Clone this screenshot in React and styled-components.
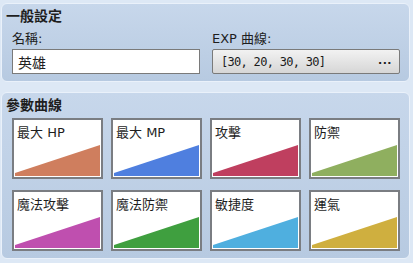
import React from 'react';
import styled, { createGlobalStyle } from 'styled-components';

const curves = [
  { label: '最大 HP', color: '#cf7e5e' },
  { label: '最大 MP', color: '#4f7fdf' },
  { label: '攻擊', color: '#bf3f5f' },
  { label: '防禦', color: '#8faf5f' },
  { label: '魔法攻擊', color: '#bf4faf' },
  { label: '魔法防禦', color: '#3f9f3f' },
  { label: '敏捷度', color: '#4fafdf' },
  { label: '運氣', color: '#cfaf3f' },
];

const GlobalStyle = createGlobalStyle`
  html, body {
    margin: 0;
    padding: 0;
    background: #dde8f5;
  }
  body {
    font-family: "DejaVu Sans", "Noto Sans CJK TC", sans-serif;
    color: #1e1e1e;
  }
`

class Curve extends React.Component {
  render() {
    const { label, color } = this.props;
    return (
      <Card>
        <CardLabel>{label}</CardLabel>
        <Graph viewBox="0 0 85 31" preserveAspectRatio="none">
          <polygon points="0,28 85,0 85,31 0,31" fill={color} />
        </Graph>
      </Card>
    )
  }
}

export default class App extends React.Component {
  render() {
    return (
      <Page>
        <GlobalStyle />
        <Panel>
          <Title>一般設定</Title>
          <Fields>
            <Field>
              <Label>名稱:</Label>
              <TextInput defaultValue="英雄" />
            </Field>
            <Field>
              <Label>EXP 曲線:</Label>
              <ExpButton>
                <ExpValue>[30, 20, 30, 30]</ExpValue>
                <Dots>...</Dots>
              </ExpButton>
            </Field>
          </Fields>
        </Panel>
        <Panel>
          <Title>參數曲線</Title>
          <CardGrid>
            {curves.map((c) => (
              <Curve key={c.label} label={c.label} color={c.color} />
            ))}
          </CardGrid>
        </Panel>
      </Page>
    )
  }
}

const Page = styled.div`
  display: flex;
  flex-direction: column;
  gap: 10px;
  padding: 3px 3px 0 1px;
  width: 409px;
`

const Panel = styled.div`
  border: 1px solid #eaf1fa;
  border-radius: 6px;
  background: linear-gradient(#c7d7eb, #b7cae1);
  padding: 3px 9px 7px 4px;
`

const Title = styled.div`
  font-family: "Noto Sans CJK TC", sans-serif;
  font-weight: 700;
  font-size: 14px;
  line-height: 17px;
  height: 17px;
`

const Fields = styled.div`
  display: grid;
  grid-template-columns: 1fr 1fr;
  gap: 12px;
  padding-left: 6px;
  margin-top: 7px;
`

const Field = styled.div`
  display: flex;
  flex-direction: column;
  gap: 2px;
`

const Label = styled.div`
  font-size: 13px;
  line-height: 16px;
`

const TextInput = styled.input`
  box-sizing: border-box;
  height: 25px;
  border: 1px solid #7a7a7a;
  background: #ffffff;
  font-family: "DejaVu Sans", "Noto Sans CJK TC", sans-serif;
  font-size: 14px;
  color: #1e1e1e;
  padding: 0 5px;
  outline: none;
`

const ExpButton = styled.div`
  box-sizing: border-box;
  height: 25px;
  border: 1px solid #7a7a7a;
  border-radius: 2px;
  background: linear-gradient(#f2f2f2, #d6d6d6);
  display: flex;
  align-items: center;
  justify-content: space-between;
  padding: 0 7px 0 8px;
`

const ExpValue = styled.span`
  font-family: "DejaVu Sans Mono", monospace;
  font-size: 12px;
  letter-spacing: -0.7px;
  color: #1a1a1a;
`

const Dots = styled.span`
  font-family: "DejaVu Sans", sans-serif;
  font-size: 11px;
  font-weight: 700;
  letter-spacing: 0.5px;
  padding-bottom: 3px;
`

const CardGrid = styled.div`
  display: grid;
  grid-template-columns: repeat(4, 91px);
  column-gap: 8px;
  row-gap: 11px;
  padding-left: 6px;
  margin-top: 5px;
`

const Card = styled.div`
  box-sizing: border-box;
  height: 61px;
  border: 2px solid #7a7d82;
  background: #ffffff;
  padding: 1px;
  display: flex;
  flex-direction: column;
  justify-content: space-between;
`

const CardLabel = styled.div`
  font-size: 13px;
  line-height: 16px;
  padding: 4px 0 0 2px;
`

const Graph = styled.svg`
  display: block;
  width: 100%;
  height: 31px;
`
